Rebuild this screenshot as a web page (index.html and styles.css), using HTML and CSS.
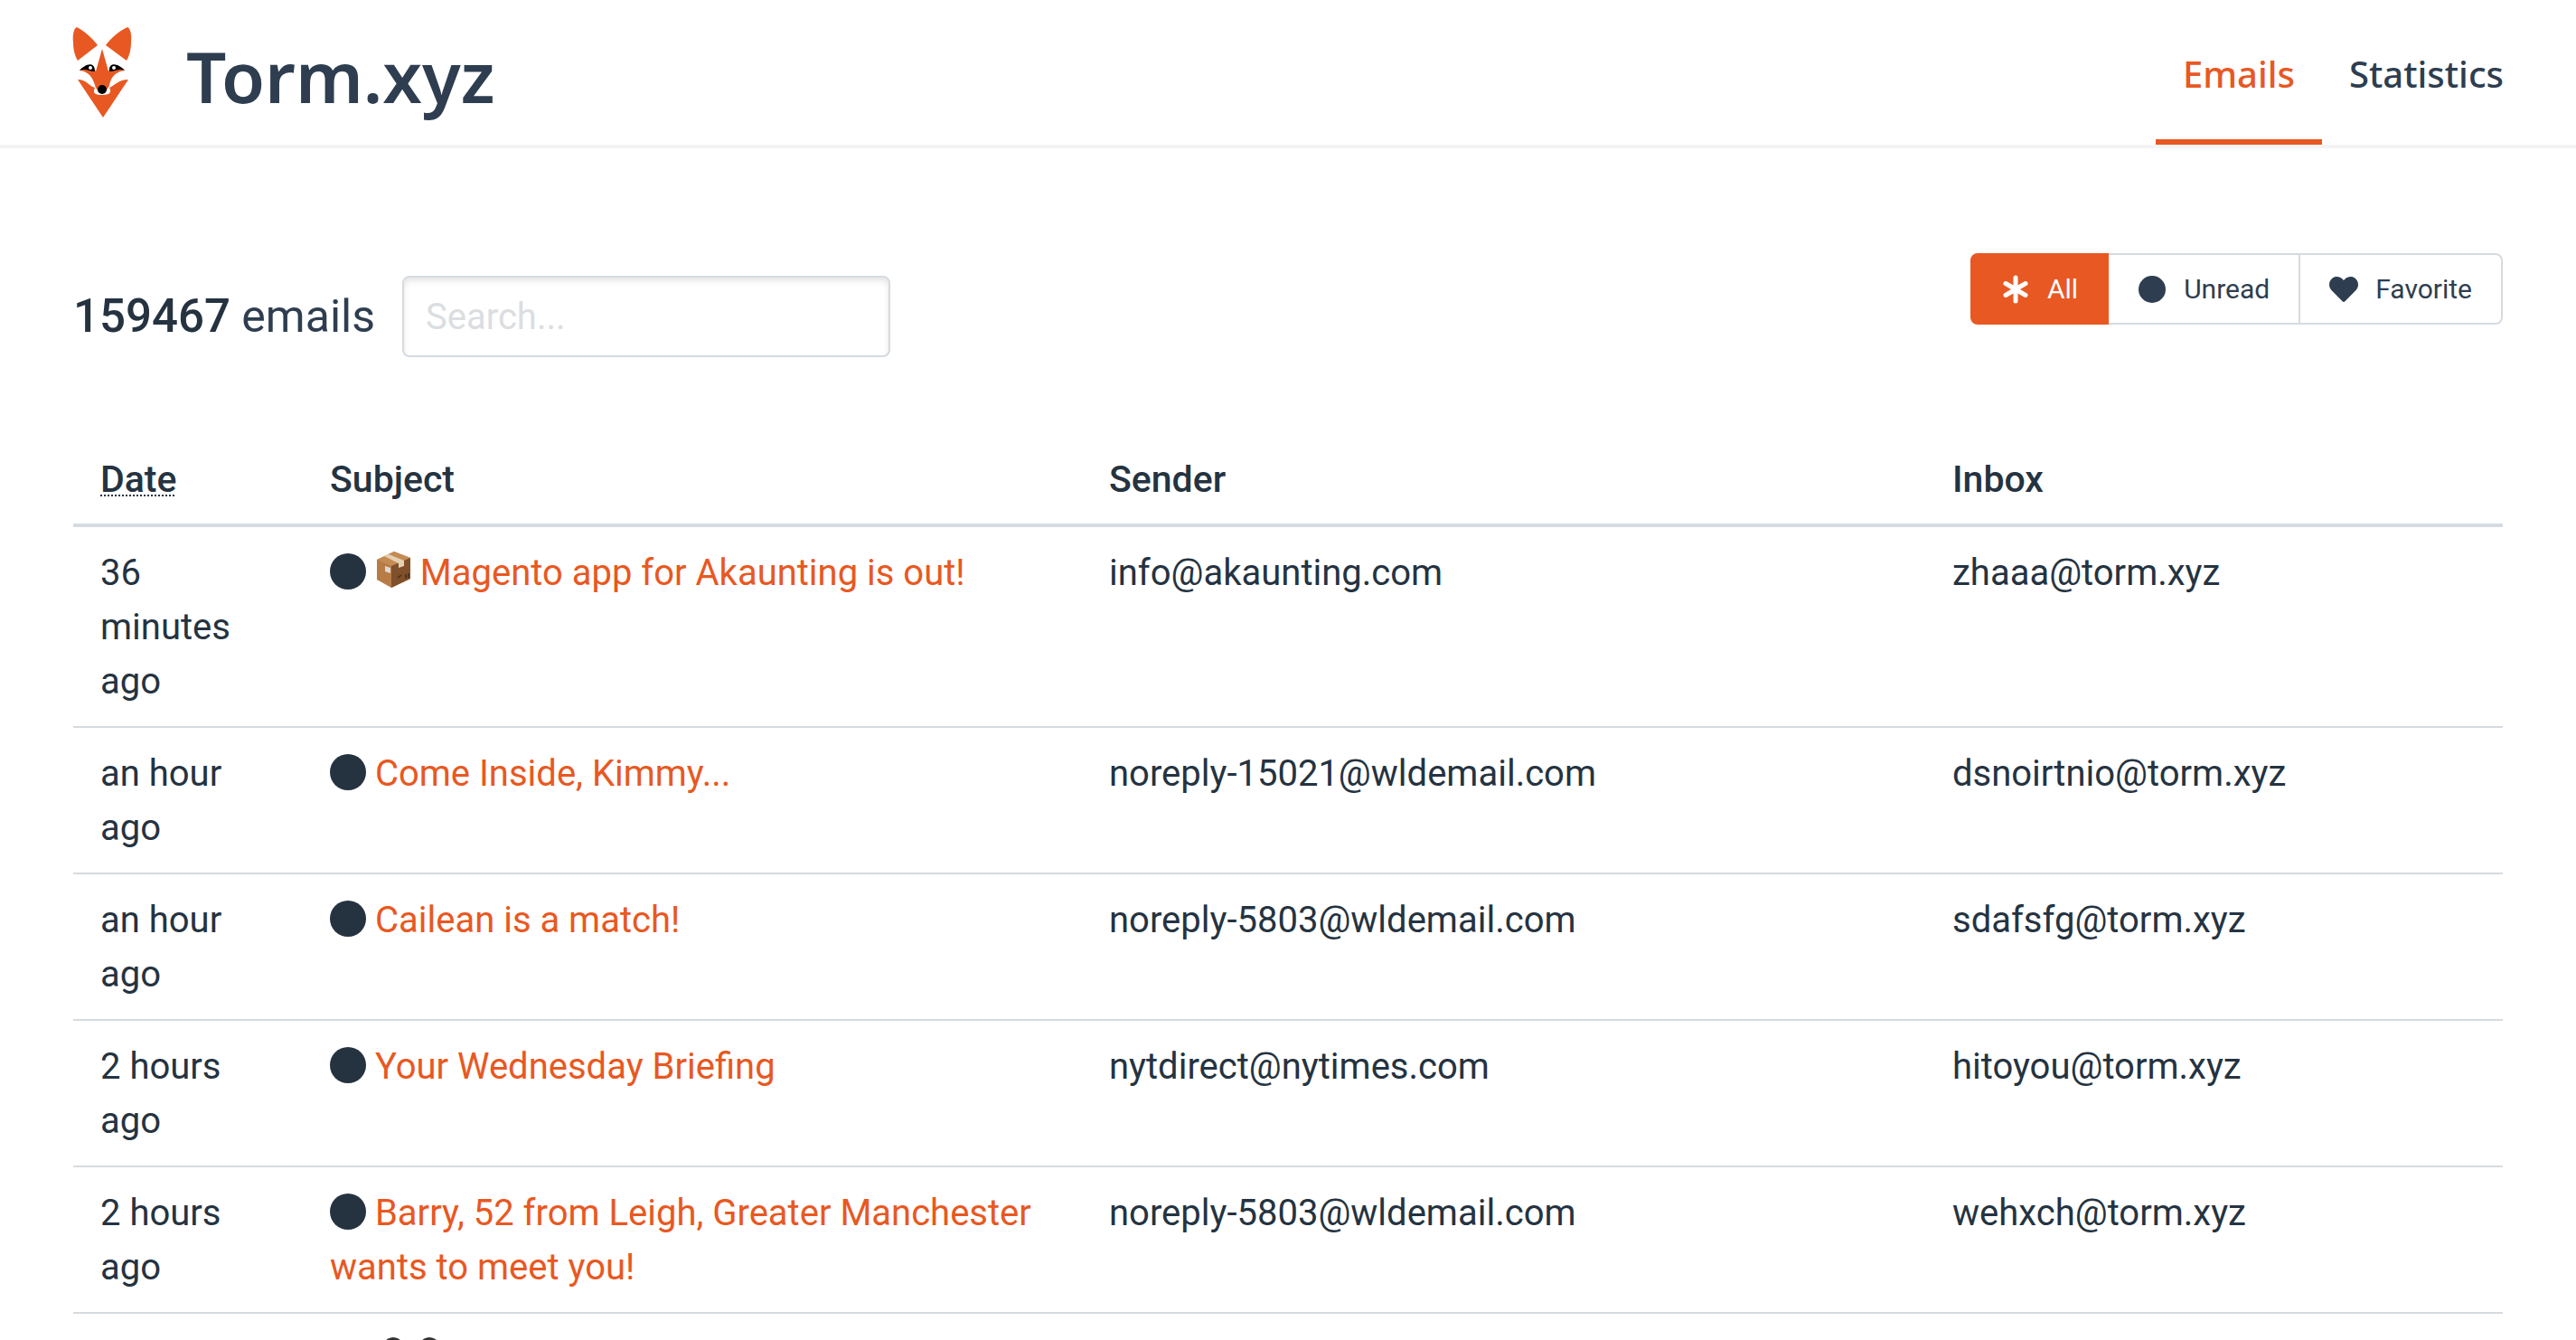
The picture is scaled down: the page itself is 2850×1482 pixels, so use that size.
FILE: index.html
```html
<!DOCTYPE html>
<html lang="en">
<head>
<meta charset="utf-8">
<title>Torm.xyz</title>
<link rel="stylesheet" href="styles.css">
</head>
<body>
<header class="navbar">
  <a class="brand" href="#">
    <svg class="logo" viewBox="0 0 66 100" aria-hidden="true">
      <g fill="#e85822">
        <path d="M5 0C2 1 0 8 1 17C1 25 3 32 6 37L28 20C22 12 13 4 5 0Z"/>
        <path d="M61 0C64 1 66 8 65 17C65 25 63 32 60 37L37 20C43 12 52 4 61 0Z"/>
        <path d="M33 24L40 49C45 40 53 43 58 48C48 49 43 55 41 64C40 68 37 71 33 72C28 71 26 68 25 64C22 55 18 49 8 48C12 43 21 40 26 49Z"/>
        <path d="M6 58C16 58 18 65 25 67C21 75 29 75 33 75C38 75 45 74 41 67C48 64 51 58 62 58L34 100Z"/>
      </g>
      <path d="M8 48C14 41 25 37 25 49C18 49 15 45 8 48Z"/>
      <path d="M58 48C52 41 40 37 41 49C48 49 51 45 58 48Z"/>
      <circle cx="20" cy="45" r="2" fill="#fff"/><circle cx="46" cy="45" r="2" fill="#fff"/>
      <circle cx="33" cy="69" r="5"/>
    </svg>
    <span class="brand-name">Torm.xyz</span>
  </a>
  <nav class="menu">
    <a class="menu-item is-active" href="#">Emails</a>
    <a class="menu-item" href="#">Statistics</a>
  </nav>
</header>
<main class="content">
  <section class="toolbar">
    <div class="summary">
      <label class="count" for="search"><strong>159467</strong> emails</label>
      <input class="search" id="search" type="text" placeholder="Search...">
    </div>
    <div class="filters">
      <button class="filter is-active" type="button"><svg class="filter-icon" viewBox="0 0 32 32" aria-hidden="true"><path d="M16 3V29M5 9.500L27 22.500M27 9.500L5 22.500" stroke="currentColor" stroke-width="5" stroke-linecap="round"/></svg>All</button>
      <button class="filter" type="button"><svg class="filter-icon" viewBox="0 0 32 32" aria-hidden="true"><circle cx="16" cy="16" r="15" fill="currentColor"/></svg>Unread</button>
      <button class="filter" type="button"><svg class="filter-icon" viewBox="0 0 512 512" aria-hidden="true"><path fill="currentColor" d="M462 62C408 16 326 24 276 76L256 97L236 76C186 24 104 16 50 62C-13 116-16 212 40 270L233 469C246 482 267 482 279 469L472 270C528 212 525 116 462 62Z"/></svg>Favorite</button>
    </div>
  </section>
  <table class="emails">
    <thead>
      <tr><th class="col-date"><abbr title="Date received">Date</abbr></th><th class="col-subject">Subject</th><th class="col-sender">Sender</th><th>Inbox</th></tr>
    </thead>
    <tbody>
      <tr><td>36 minutes ago</td><td><span class="unread"></span> <svg class="emoji" viewBox="0 0 40 42" aria-hidden="true"><path fill="#b77b46" d="M2 10L21 1L39 8V31L18 41L2 32Z"/><path fill="#c58b54" d="M2 10L21 1L39 8L18 17Z"/><path fill="#80502b" d="M18 17L39 8V31L18 41Z"/><path fill="#e4d0b5" d="M10 6L15 4L32 11V17L26 19V14Z"/><path fill="#dbd9d5" d="M11 17L17 19V25L11 23Z"/><path stroke="#50351f" stroke-width="2" d="M25 30L29 27M34 26V31M37 25V30"/></svg> <a href="#">Magento app for Akaunting is out!</a></td><td>info@akaunting.com</td><td>zhaaa@torm.xyz</td></tr>
      <tr><td>an hour ago</td><td><span class="unread"></span> <a href="#">Come Inside, Kimmy...</a></td><td>noreply-15021@wldemail.com</td><td>dsnoirtnio@torm.xyz</td></tr>
      <tr><td>an hour ago</td><td><span class="unread"></span> <a href="#">Cailean is a match!</a></td><td>noreply-5803@wldemail.com</td><td>sdafsfg@torm.xyz</td></tr>
      <tr><td>2 hours ago</td><td><span class="unread"></span> <a href="#">Your Wednesday Briefing</a></td><td>nytdirect@nytimes.com</td><td>hitoyou@torm.xyz</td></tr>
      <tr><td>2 hours ago</td><td><span class="unread"></span> <a href="#">Barry, 52 from Leigh, Greater Manchester wants to meet you!</a></td><td>noreply-5803@wldemail.com</td><td>wehxch@torm.xyz</td></tr>
      <tr><td></td><td><span class="unread"></span> <svg class="emoji" viewBox="0 0 40 42" aria-hidden="true"><ellipse cx="20" cy="21" rx="15" ry="21" fill="#333"/></svg><svg class="emoji" viewBox="0 0 40 42" aria-hidden="true"><ellipse cx="20" cy="21" rx="15" ry="21" fill="#333"/></svg></td><td></td><td></td></tr>
    </tbody>
  </table>
</main>
</body>
</html>
```
FILE: styles.css
```css
* { box-sizing: border-box; }
body { height: 100vh; margin: 0; overflow: hidden; background: #fff; color: #253341; font: 40px/60px Roboto, "Liberation Sans", sans-serif; }
a { color: #e85822; text-decoration: none; }
.navbar { display: flex; justify-content: space-between; padding: 0 50px 0 80px; border-bottom: 4px solid #f4f4f4; font-family: "Noto Sans", sans-serif; color: #2e3e50; }
.brand { display: flex; align-items: center; gap: 60px; color: inherit; }
.logo { width: 66px; height: 100px; }
.brand-name { padding-top: 8px; font-size: 78px; line-height: 152px; font-weight: 600; }
.menu { display: flex; }
.menu-item { padding: 10px 30px 0; line-height: 144px; border-bottom: 6px solid transparent; color: inherit; font-size: 40px; font-weight: 500; }
.menu-item.is-active { color: #e85822; border-color: #e85822; }
.content { padding: 116px 81px 0; }
.toolbar { display: flex; justify-content: space-between; align-items: flex-start; }
.summary { display: flex; align-items: center; gap: 30px; padding-top: 25px; }
.count { font-size: 50px; color: #2e3e50; }
.count strong { font-size: 51px; font-weight: 500; color: #253341; }
.search { width: 540px; height: 90px; padding: 0 24px; border: 2px solid #d5dbe1; border-radius: 8px; box-shadow: inset 0 4px 6px rgba(10, 10, 10, 0.1); font: inherit; color: inherit; }
.search::placeholder { color: #dbdee1; opacity: 1; }
.filters { display: flex; }
.filter { display: flex; align-items: center; gap: 19px; height: 79px; margin-left: -2px; padding: 0 32px; border: 2px solid #d5dbe1; background: #fff; color: #2e3e50; font: 30px/45px Roboto, "Liberation Sans", sans-serif; }
.filter:first-child { border-radius: 8px 0 0 8px; margin-left: 0; }
.filter:last-child { border-radius: 0 8px 8px 0; }
.filter.is-active { z-index: 1; background: #e85822; border-color: #e85822; color: #fff; }
.filter-icon { width: 32px; height: 32px; }
.emails { width: 100%; margin-top: 84px; border-collapse: separate; border-spacing: 0; table-layout: fixed; }
.emails th, .emails td { padding: 21px 30px 19px; border-bottom: 2px solid #d5dbe1; text-align: left; vertical-align: top; }
.emails th { border-bottom-width: 4px; font-size: 41px; font-weight: 500; }
.emails abbr { text-decoration: underline dotted 2px; text-underline-offset: 3px; text-decoration-skip-ink: none; }
.col-date { width: 254px; }
.col-subject { width: 862px; }
.col-sender { width: 933px; }
.unread { display: inline-block; width: 40px; height: 40px; border-radius: 50%; background: #253341; vertical-align: -5px; }
.emoji { width: 40px; height: 42px; vertical-align: -4px; }
```
